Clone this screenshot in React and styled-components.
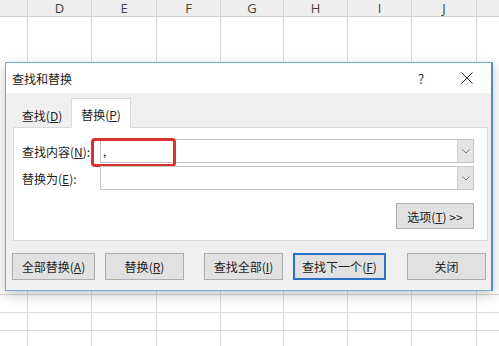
import React from 'react';
import styled, { createGlobalStyle } from 'styled-components';

const GlobalStyle = createGlobalStyle`
  html, body { margin: 0; padding: 0; background: #fff; }
  body { font-family: "Noto Sans CJK SC", "Noto Sans", sans-serif; }
`;

const COLS = [
  { name: '', width: 28 },
  { name: 'D', width: 64 },
  { name: 'E', width: 65 },
  { name: 'F', width: 64 },
  { name: 'G', width: 63 },
  { name: 'H', width: 64 },
  { name: 'I', width: 64 },
  { name: 'J', width: 65 },
  { name: '', width: 30 },
];

const ROWS = [278, 18, 18, 18];

const Page = styled.div`
  position: relative;
  width: 499px;
  height: 346px;
  overflow: hidden;
  background: #fff;
`;

const Sheet = styled.div`
  display: flex;
  flex-direction: column;
`;

const HeaderRow = styled.div`
  display: flex;
  height: 17px;
  background: #efefef;
  border-bottom: 1px solid #d0d0d0;
  box-sizing: border-box;
`;

const HeaderCell = styled.div`
  flex: 0 0 ${(p) => p.w}px;
  box-sizing: border-box;
  border-right: 1px solid #d6d6d6;
  display: flex;
  align-items: center;
  justify-content: center;
  font-family: "Open Sans", "Noto Sans", sans-serif;
  font-size: 13px;
  color: #444;
  line-height: 1;
`;

const Row = styled.div`
  display: flex;
  height: ${(p) => p.h}px;
`;

const Cell = styled.div`
  flex: 0 0 ${(p) => p.w}px;
  box-sizing: border-box;
  border-right: 1px solid #dadada;
  border-bottom: 1px solid #dadada;
`;

const Dialog = styled.div`
  position: absolute;
  left: 5px;
  top: 62px;
  width: 488px;
  height: 229px;
  box-sizing: border-box;
  border: 1px solid #7fa8d8;
  border-right: 2px solid #4f8bcc;
  background: #f0f0f0;
  box-shadow: 0 4px 12px rgba(0, 0, 0, 0.22);
  display: flex;
  flex-direction: column;
`;

const TitleBar = styled.div`
  height: 30px;
  background: #fff;
  display: flex;
  align-items: center;
  padding: 0 0 0 6px;
  font-size: 12px;
  color: #1a1a1a;
`;

const Title = styled.div`
  flex: 1;
`;

const TitleIcon = styled.div`
  width: ${(p) => p.w}px;
  display: flex;
  justify-content: center;
  align-items: center;
  font-size: 13px;
  color: #333;
`;

const Body = styled.div`
  flex: 1;
  padding: 6px 3px 0 7px;
  display: flex;
  flex-direction: column;
`;

const Tabs = styled.div`
  display: flex;
  align-items: flex-end;
  height: 29px;
  position: relative;
  z-index: 1;
  margin-bottom: -1px;
`;

const Tab = styled.div`
  box-sizing: border-box;
  width: ${(p) => (p.active ? 60 : 58)}px;
  height: ${(p) => (p.active ? 30 : 25)}px;
  background: ${(p) => (p.active ? '#fff' : '#f0f0f0')};
  border: 1px solid ${(p) => (p.active ? '#d9d9d9' : 'transparent')};
  border-bottom: ${(p) => (p.active ? '1px solid #fff' : '1px solid #d9d9d9')};
  display: flex;
  align-items: center;
  justify-content: center;
  padding-top: ${(p) => (p.active ? 2 : 0)}px;
  font-size: 12px;
  color: #222;
`;

const Panel = styled.div`
  width: 475px;
  height: 114px;
  box-sizing: border-box;
  background: #fff;
  border: 1px solid #d9d9d9;
  padding: 11px 13px 0 8px;
  display: flex;
  flex-direction: column;
  gap: 3px;
`;

const FieldRow = styled.div`
  display: flex;
  align-items: center;
  height: 24px;
`;

const Label = styled.div`
  width: 78px;
  font-size: 12px;
  color: #222;
`;

const InputBox = styled.div`
  position: relative;
  width: 374px;
  height: 24px;
  box-sizing: border-box;
  border: 1px solid #c4c4c4;
  background: #fff;
  display: flex;
  align-items: center;
`;

const InputText = styled.div`
  flex: 1;
  padding-left: 2px;
  font-size: 12px;
  color: #111;
  line-height: 1;
`;

const DropButton = styled.div`
  width: 16px;
  height: 100%;
  box-sizing: border-box;
  background: #e4e4e4;
  border-left: 1px solid #cfcfcf;
  display: flex;
  align-items: center;
  justify-content: center;
`;

const Highlight = styled.div`
  position: absolute;
  left: -10px;
  top: -2px;
  width: 85px;
  height: 29px;
  box-sizing: border-box;
  border: 3px solid #d9322c;
  border-radius: 4px;
`;

const OptionsRow = styled.div`
  display: flex;
  justify-content: flex-end;
  margin-top: 10px;
`;

const Button = styled.div`
  box-sizing: border-box;
  width: ${(p) => p.w}px;
  height: ${(p) => p.h || 27}px;
  margin-left: ${(p) => p.ml || 0}px;
  background: #e1e1e1;
  border: ${(p) => (p.focused ? '2px solid #2a72c5' : '1px solid #adadad')};
  display: flex;
  align-items: center;
  justify-content: center;
  font-size: 12px;
  color: #222;
  white-space: nowrap;
`;

const ButtonRow = styled.div`
  display: flex;
  margin-top: 12px;
  margin-left: -1px;
`;

const Chevron = () => (
  <svg width="8" height="5" viewBox="0 0 8 5">
    <path d="M0.5 0.5 L4 4 L7.5 0.5" fill="none" stroke="#777" strokeWidth="1" />
  </svg>
);

const CloseIcon = () => (
  <svg width="12" height="12" viewBox="0 0 12 12">
    <path d="M0.5 0.5 L11.5 11.5 M11.5 0.5 L0.5 11.5" stroke="#333" strokeWidth="1" />
  </svg>
);

const Key = ({ k }) => (
  <>
    (<u>{k}</u>)
  </>
);

export default function App() {
  return (
    <Page>
      <GlobalStyle />
      <Sheet>
        <HeaderRow>
          {COLS.map((c, i) => (
            <HeaderCell key={i} w={c.width}>{c.name}</HeaderCell>
          ))}
        </HeaderRow>
        {ROWS.map((h, r) => (
          <Row key={r} h={h}>
            {COLS.map((c, i) => (
              <Cell key={i} w={c.width} />
            ))}
          </Row>
        ))}
      </Sheet>

      <Dialog>
        <TitleBar>
          <Title>查找和替换</Title>
          <TitleIcon w={20}>?</TitleIcon>
          <TitleIcon w={25}></TitleIcon>
          <TitleIcon w={22}><CloseIcon /></TitleIcon>
          <TitleIcon w={13}></TitleIcon>
        </TitleBar>
        <Body>
          <Tabs>
            <Tab>查找<Key k="D" /></Tab>
            <Tab active>替换<Key k="P" /></Tab>
          </Tabs>
          <Panel>
            <FieldRow>
              <Label>查找内容<Key k="N" />:</Label>
              <InputBox>
                <InputText>,</InputText>
                <DropButton><Chevron /></DropButton>
                <Highlight />
              </InputBox>
            </FieldRow>
            <FieldRow>
              <Label>替换为<Key k="E" />:</Label>
              <InputBox>
                <InputText />
                <DropButton><Chevron /></DropButton>
              </InputBox>
            </FieldRow>
            <OptionsRow>
              <Button w={78} h={26}>选项<Key k="T" />&nbsp;&gt;&gt;</Button>
            </OptionsRow>
          </Panel>
          <ButtonRow>
            <Button w={83}>全部替换<Key k="A" /></Button>
            <Button w={79} ml={10}>替换<Key k="R" /></Button>
            <Button w={79} ml={20}>查找全部<Key k="I" /></Button>
            <Button w={93} ml={10} focused>查找下一个<Key k="F" /></Button>
            <Button w={79} ml={21}>关闭</Button>
          </ButtonRow>
        </Body>
      </Dialog>
    </Page>
  );
}
